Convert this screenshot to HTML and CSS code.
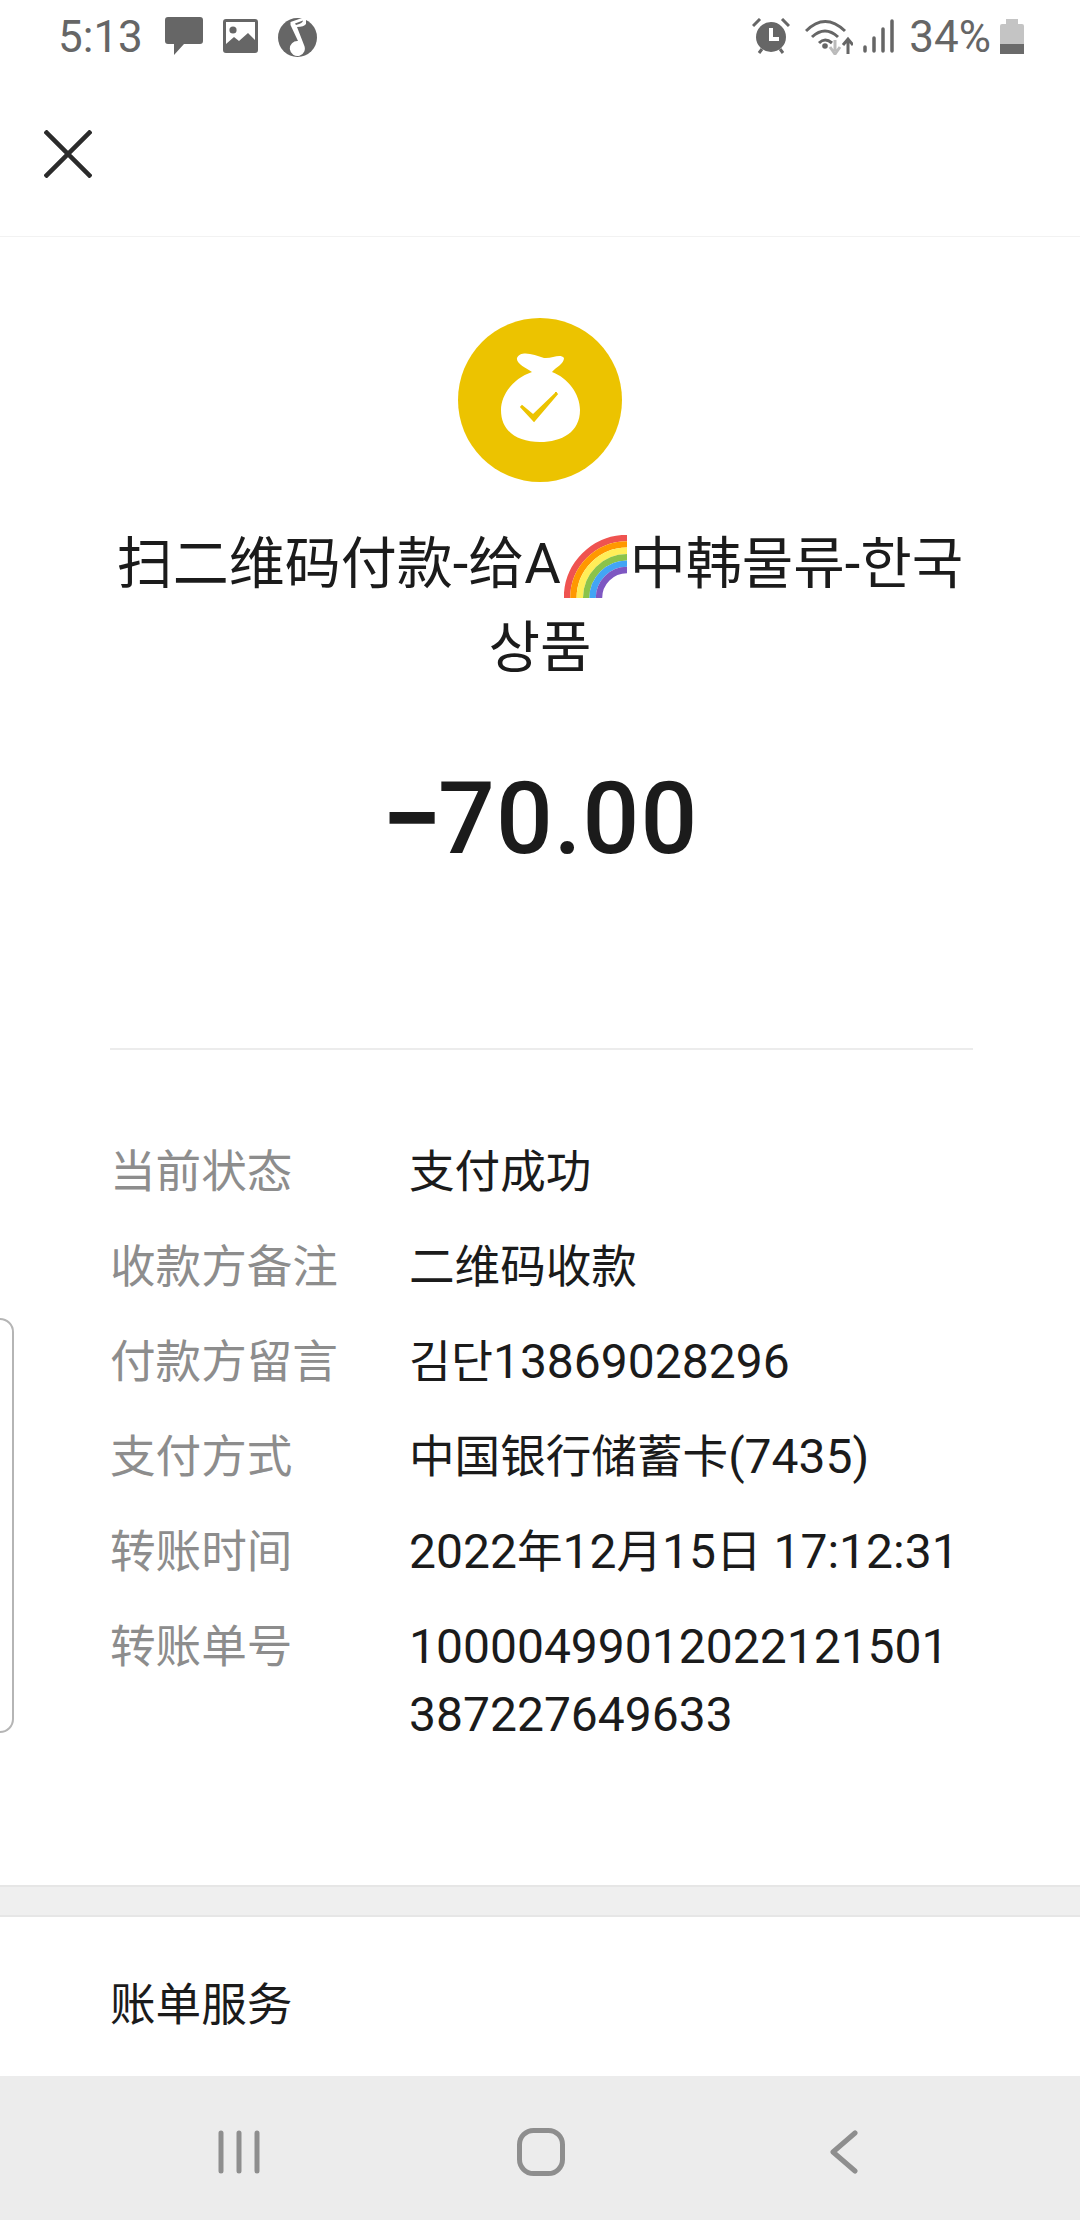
FILE: index.html
```html
<!DOCTYPE html>
<html lang="zh">

<head>
    <meta charset="UTF-8">
    <meta name="viewport" content="width=device-width, initial-scale=1.0">
    <title>账单详情</title>
    <link rel="stylesheet" href="styles.css">
</head>

<body>
    <div class="screen">

        <!-- Status bar -->
        <div class="status">
            <div class="status-left">
                <span class="clock">5:13</span>
                <svg class="ic-msg" viewBox="0 0 38 38"><path d="M3 0H35Q38 0 38 3V24Q38 27 35 27H19L9 38V27H3Q0 27 0 24V3Q0 0 3 0Z" fill="#666"/></svg>
                <svg class="ic-pic" viewBox="0 0 35 34"><path fill-rule="evenodd" d="M3 0H32Q35 0 35 3V31Q35 34 32 34H3Q0 34 0 31V3Q0 0 3 0ZM3 3V25L11 18L16 22L25 14L32 21V3Z" fill="#666"/><circle cx="10" cy="11" r="3.6" fill="#666"/></svg>
                <svg class="ic-music" viewBox="0 0 39 42"><circle cx="19.500" cy="22.500" r="19.500" fill="#666"/><path d="M12.500 7L27 2L28 0L28 9Q26 12 19 12L26 30A7.500 7.500 0 1 1 20 26L12.500 10Z" fill="#fff"/><path d="M17 8.500L25 5.500Q25 8 18 10Z" fill="#666"/></svg>
            </div>
            <div class="status-right">
                <svg class="ic-alarm" viewBox="0 0 38 36"><path d="M1 8L8 1M37 8L30 1M7 35L10 31M31 35L28 31" stroke="#666" stroke-width="3" fill="none"/><circle cx="19" cy="19" r="15" fill="#666"/><path d="M19 10V21H27" stroke="#fff" stroke-width="4" fill="none"/></svg>
                <svg class="ic-wifi" viewBox="0 0 48 37"><path d="M1 13Q20 -6 40 13M7 19Q20 7 33 19M14 25Q20 19 27 25" stroke="#666" stroke-width="3" fill="none"/><circle cx="20" cy="28" r="2.800" fill="#666"/><path d="M30 22V33M25 29L30 36L35 29" stroke="#bbb" stroke-width="3" fill="none"/><path d="M43 36V22M38 27L43 21L48 27" stroke="#666" stroke-width="3" fill="none"/></svg>
                <svg class="ic-signal" viewBox="0 0 31 34"><g stroke="#666" stroke-width="3.500" stroke-linecap="round"><path d="M2 32V28M11 32V19M20 32V10M29 32V2"/></g></svg>
                <span class="batt-text">34%</span>
                <div class="batt"><div class="batt-cap"></div><div class="batt-body"><div class="batt-fill"></div></div></div>
            </div>
        </div>

        <!-- Top bar -->
        <div class="topbar">
            <svg class="close" viewBox="0 0 48 48"><path d="M1 1L47 47M47 1L1 47" stroke="#2b2b2b" stroke-width="4.500" fill="none"/></svg>
        </div>

        <!-- Summary -->
        <div class="summary">
            <svg class="bag" viewBox="0 0 164 164">
                <circle cx="82" cy="82" r="82" fill="#ecc300"/>
                <path d="M59 40C62 32 76 36 86 40C94 41 102 35 106 40C106 46 98 49 94 54C110 60 122 76 122 92C122 114 104 124 82 124C60 124 43 114 43 92C43 76 56 60 74 54C68 50 58 46 59 40Z" fill="#fff"/>
                <path d="M63 88L75 98L99 75L76 102Z" stroke="#ecc300" stroke-width="3" fill="#ecc300"/>
            </svg>
            <div class="title">扫二维码付款-给A<svg class="rainbow" viewBox="0 0 63 63">
                <g fill="none" stroke-width="6.400">
                    <path d="M63 3A60 60 0 0 0 3 63" stroke="#ef5350"/>
                    <path d="M63 9.400A53.600 53.600 0 0 0 9.400 63" stroke="#ff9800"/>
                    <path d="M63 15.800A47.200 47.200 0 0 0 15.800 63" stroke="#ffee58"/>
                    <path d="M63 22.200A40.800 40.800 0 0 0 22.200 63" stroke="#8bc34a"/>
                    <path d="M63 28.600A34.400 34.400 0 0 0 28.600 63" stroke="#42a5f5"/>
                    <path d="M63 35A28 28 0 0 0 35 63" stroke="#7e57c2"/>
                </g>
            </svg>中韩물류-한국<br>상품</div>
            <div class="amount"><span class="minus">−</span>70.00</div>
        </div>

        <!-- Details -->
        <div class="details">
            <div class="row"><div class="label">当前状态</div><div class="value">支付成功</div></div>
            <div class="row"><div class="label">收款方备注</div><div class="value">二维码收款</div></div>
            <div class="row"><div class="label">付款方留言</div><div class="value">김단<span class="num">13869028296</span></div></div>
            <div class="row"><div class="label">支付方式</div><div class="value">中国银行储蓄卡<span class="num">(7435)</span></div></div>
            <div class="row"><div class="label">转账时间</div><div class="value"><span class="num">2022</span>年<span class="num">12</span>月<span class="num">15</span>日<span class="num"> 17:12:31</span></div></div>
            <div class="row"><div class="label">转账单号</div><div class="value"><span class="num">10000499012022121501<br>387227649633</span></div></div>
        </div>

        <div class="band"></div>

        <div class="service">账单服务</div>

        <!-- Nav bar -->
        <div class="navbar">
            <svg class="nav-recent" viewBox="0 0 42 44"><path d="M3 3V41M21 3V41M39 3V41" stroke="#8e8e8e" stroke-width="5" stroke-linecap="round" fill="none"/></svg>
            <svg class="nav-home" viewBox="0 0 48 48"><rect x="2.500" y="2.500" width="43" height="43" rx="14" stroke="#8e8e8e" stroke-width="5" fill="none"/></svg>
            <svg class="nav-back" viewBox="0 0 28 44"><path d="M25 3L3 22L25 41" stroke="#8e8e8e" stroke-width="5" stroke-linecap="round" stroke-linejoin="round" fill="none"/></svg>
        </div>

        <!-- Edge panel handle -->
        <div class="edge"></div>
    </div>
</body>

</html>
```

FILE: styles.css
```css
* {
    box-sizing: border-box;
}

body {
    margin: 0;
    background: #fff;
    font-family: Roboto, "Noto Sans CJK SC", "Noto Sans CJK KR", sans-serif;
    color: #1b1b1b;
}

.screen {
    position: relative;
    width: 1080px;
    height: 2220px;
    display: flex;
    flex-direction: column;
    overflow: hidden;
}

.status {
    height: 72px;
    padding: 0 56px 0 58px;
    display: flex;
    justify-content: space-between;
    align-items: center;
    color: #666;
}

.status-left,
.status-right {
    display: flex;
    align-items: center;
}

.clock {
    font-size: 44px;
    margin-top: 2px;
    margin-right: 22px;
}

.ic-msg {
    width: 38px;
    height: 38px;
    margin-right: 20px;
}

.ic-pic {
    width: 35px;
    height: 34px;
    margin-right: 20px;
}

.ic-music {
    width: 39px;
    height: 42px;
}

.ic-alarm {
    width: 38px;
    height: 36px;
    margin-right: 15px;
}

.ic-wifi {
    width: 48px;
    height: 37px;
    margin-right: 10px;
}

.ic-signal {
    width: 31px;
    height: 34px;
    margin-right: 15px;
}

.batt-text {
    font-size: 44px;
    margin-top: 2px;
    margin-right: 9px;
}

.batt {
    width: 24px;
    display: flex;
    flex-direction: column;
    align-items: center;
}

.batt-cap {
    width: 12px;
    height: 5px;
    background: #c4c4c4;
}

.batt-body {
    width: 24px;
    height: 30px;
    background: #c4c4c4;
    border-radius: 2px;
    display: flex;
    align-items: flex-end;
}

.batt-fill {
    width: 100%;
    height: 10px;
    background: #6b6b6b;
}

.topbar {
    height: 165px;
    padding: 58px 0 0 44px;
    border-bottom: 1px solid #f2f2f2;
}

.close {
    display: block;
    width: 48px;
    height: 48px;
}

.summary {
    display: flex;
    flex-direction: column;
    align-items: center;
    padding-top: 81px;
}

.bag {
    width: 164px;
    height: 164px;
}

.title {
    margin-top: 40px;
    width: 900px;
    font-size: 56px;
    line-height: 84px;
    text-align: center;
}

.rainbow {
    width: 63px;
    height: 63px;
    margin: 0 3px;
    vertical-align: -15px;
}

.amount {
    margin-top: 71px;
    font-size: 100px;
    line-height: 116px;
    font-weight: 500;
    letter-spacing: 1px;
}

.minus {
    font-size: 107px;
    font-weight: 700;
    line-height: 1;
    margin-right: -4px;
    vertical-align: -2px;
}

.details {
    margin: 171px 107px 0 110px;
    padding-top: 89px;
    border-top: 2px solid #ececec;
}

.row {
    display: flex;
    font-size: 45.600px;
    line-height: 68px;
    margin-bottom: 27px;
}

.label {
    width: 299px;
    color: #8d8d8d;
}

.value {
    flex: 1;
}

.num {
    font-size: 48px;
    line-height: 1;
}

.band {
    position: absolute;
    top: 1885px;
    left: 0;
    right: 0;
    height: 32px;
    background: #efefef;
    border-top: 2px solid #e6e6e6;
    border-bottom: 2px solid #e6e6e6;
}

.service {
    position: absolute;
    top: 1926px;
    left: 110px;
    font-size: 45.600px;
    line-height: 159px;
}

.navbar {
    position: absolute;
    left: 0;
    right: 0;
    bottom: 0;
    height: 144px;
    background: #ececec;
}

.navbar svg {
    position: absolute;
    top: 54px;
}

.nav-recent {
    left: 218px;
    width: 42px;
    height: 44px;
}

.navbar .nav-home {
    top: 52px;
    left: 517px;
    width: 48px;
    height: 48px;
}

.nav-back {
    left: 830px;
    width: 28px;
    height: 44px;
}

.edge {
    position: absolute;
    top: 1318px;
    left: -20px;
    width: 34px;
    height: 415px;
    border: 2px solid #b5b5b5;
    border-radius: 14px;
}
```
